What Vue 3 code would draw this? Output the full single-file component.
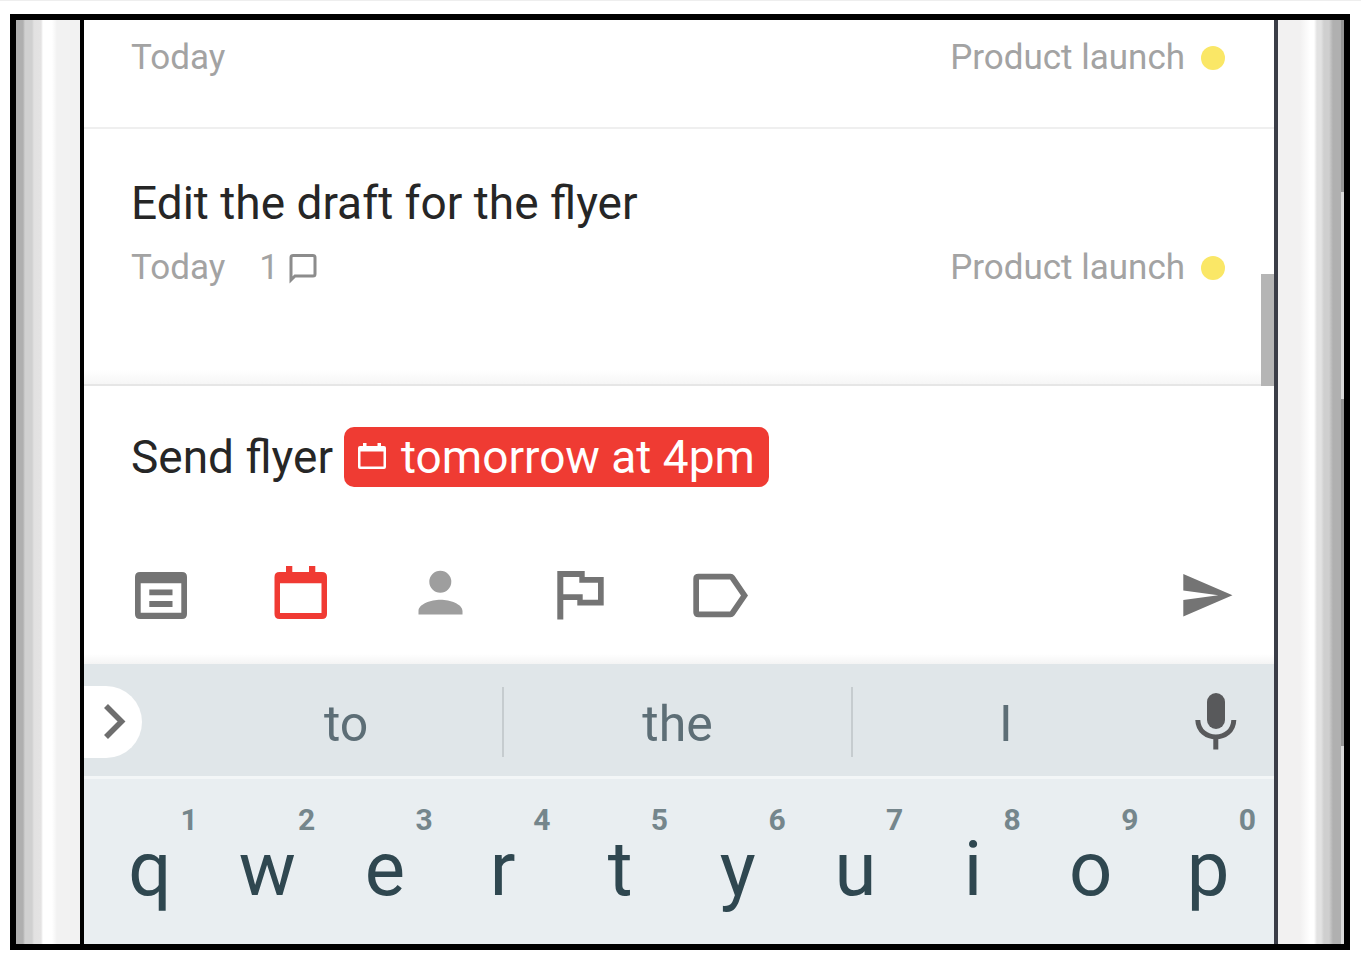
<template>
  <main class="page">
    <div class="frame">
      <div class="bezel bezel-left"></div>

      <div class="screen">
        <section class="task-list">
          <article class="task">
            <div class="task-meta">
              <span>Today</span>
              <span class="project">Product launch <i class="dot"></i></span>
            </div>
          </article>
          <article class="task task-last">
            <h2>Edit the draft for the flyer</h2>
            <div class="task-meta">
              <span>Today</span>
              <span class="comments">
                1
                <svg width="30" height="32" viewBox="0 0 30 32" aria-hidden="true">
                  <path d="M3 28V5.500Q3 3.500 5 3.500H25Q27 3.500 27 5.500V22Q27 24 25 24H7Z" fill="none" stroke="#8c8c8c" stroke-width="3" />
                </svg>
              </span>
              <span class="project">Product launch <i class="dot"></i></span>
            </div>
          </article>
          <div class="scroll-thumb"></div>
        </section>

        <section class="composer">
          <div class="entry">
            <input v-model="taskName" type="text" aria-label="Task name" />
            <button type="button" class="date-chip">
              <svg width="28" height="28" viewBox="0 0 28 28" aria-hidden="true">
                <path fill="#fff" fill-rule="evenodd" d="M5 0H8.500V3H19.500V0H23V3H26Q28 3 28 5V24Q28 26 26 26H2Q0 26 0 24V5Q0 3 2 3H5ZM2.500 8.500V23.500H25.500V8.500Z" />
              </svg>
              <span>tomorrow at 4pm</span>
            </button>
          </div>

          <div class="toolbar">
            <button
              v-for="tool in tools"
              :key="tool.name"
              type="button"
              class="tool"
              :class="tool.name"
              :aria-label="tool.label"
            >
              <svg width="70" height="70" viewBox="0 0 70 70" aria-hidden="true">
                <path :d="tool.path" fill-rule="evenodd" />
              </svg>
            </button>
          </div>
        </section>

        <section class="suggestions">
          <button type="button" class="expand" aria-label="More">
            <svg width="58" height="72" viewBox="0 0 58 72" aria-hidden="true">
              <path d="M22 20L37.500 35.500L22 51" fill="none" stroke="#6e6e6e" stroke-width="5.600" />
            </svg>
          </button>
          <div class="words">
            <button v-for="word in words" :key="word" type="button">{{ word }}</button>
          </div>
          <button type="button" class="mic" aria-label="Voice input">
            <svg width="50" height="64" viewBox="0 0 50 64" aria-hidden="true">
              <rect x="16" y="3" width="18" height="36" rx="9" fill="#58595b" />
              <path d="M6.800 30C7.500 52.500 42.100 52.500 42.800 30M24.800 46V59.500" fill="none" stroke="#58595b" stroke-width="5" />
            </svg>
          </button>
        </section>

        <section class="keyboard">
          <button v-for="key in keys" :key="key.letter" type="button" class="key">
            <span class="digit">{{ key.digit }}</span>
            <span class="letter">{{ key.letter }}</span>
          </button>
        </section>
      </div>

      <div class="bezel bezel-right">
        <div class="side-buttons"></div>
      </div>
    </div>
  </main>
</template>

<script setup>
import { ref } from 'vue';

const taskName = ref('Send flyer');

const words = ['to', 'the', 'I'];

const keys = 'qwertyuiop'.split('').map((letter, index) => ({
  letter,
  digit: (index + 1) % 10
}));

const tools = [
  {
    name: 'project-list',
    label: 'Project',
    path: 'M14 12H56Q61 12 61 17V54Q61 59 56 59H14Q9 59 9 54V17Q9 12 14 12ZM14.700 23.300V52.700H55.300V23.300ZM23.300 29.500H46.500V35.200H23.300ZM23.300 41H46.500V47H23.300Z'
  },
  {
    name: 'date',
    label: 'Due date',
    path: 'M20 6H26.300V12H43V6H49.300V12H56Q61 12 61 17V54Q61 59 56 59H13.500Q8.500 59 8.500 54V17Q8.500 12 13.500 12H20ZM14 23.300V53H55.500V23.300Z'
  },
  {
    name: 'person',
    label: 'Assignee',
    path: 'M34.300 10.700A11 11 0 0 1 34.300 32.700A11 11 0 0 1 34.300 10.700ZM12.500 54.500V51C12.500 44 25 39.700 34.500 39.700C44 39.700 56.500 44 56.500 51V54.500Z'
  },
  {
    name: 'flag',
    label: 'Priority',
    path: 'M11.300 59.500V11H38.700V17H57.700V45.400H31.300V40H17.300V59.500ZM17.300 17V34.300H36.700V39.700H52V22.700H33.300V17Z'
  },
  {
    name: 'label',
    label: 'Label',
    path: 'M12.500 13.700H44.500Q47 13.700 48.500 15.700L62 35.500L48.500 55.300Q47 57.300 44.500 57.300H12.500Q7.300 57.300 7.300 52.300V18.700Q7.300 13.700 12.500 13.700ZM13 19.400V51.600H44L55 35.500L44 19.400Z'
  },
  {
    name: 'send',
    label: 'Send',
    path: 'M11.300 56.500L60.500 35.300L11.300 14V30.500L46.300 35.300L11.300 40Z'
  }
];
</script>

<style>
body {
  margin: 0;
  background: #fff;
}
</style>

<style scoped>
.page {
  box-sizing: border-box;
  padding: 13px 11px 16px 10px;
  border-top: 1px solid #eee;
  font-family: Roboto, "Liberation Sans", sans-serif;
}

button,
input {
  margin: 0;
  padding: 0;
  border: none;
  background: none;
  color: inherit;
  font: inherit;
}

button {
  cursor: pointer;
}

svg {
  display: block;
  flex: none;
}

.frame {
  display: flex;
  border: 6px solid #000;
}

.bezel {
  flex: none;
}

.bezel-left {
  width: 64px;
  background: linear-gradient(to right, #afafaf 7px, #d0d0d0 9px, #d0d0d0 16px, #e2e1e1 18px, #e4e3e3 25px, #fff 27px, #fff 36px, #f2f2f2 41px);
}

.bezel-right {
  display: flex;
  justify-content: flex-end;
  width: 66px;
  background: linear-gradient(to right, #f2f1f1 22px, #fff 32px, #fff 36px, #e2e2e2 39px, #e2e2e2 43px, #cfcfcf 46px, #cfcfcf 51px, #b0b0b0 55px);
}

.side-buttons {
  width: 3px;
  background: linear-gradient(#969696 172px, #dadada 172px, #dadada 379px, #969696 379px, #969696 726px, #dadada 726px);
}

.screen {
  flex: 1;
  min-width: 0;
  border-right: 4px solid #3a3d47;
  border-left: 4px solid #000;
  background: #fff;
}

.task-list {
  position: relative;
}

.task {
  padding: 16px 49px 47px 47px;
  border-bottom: 2px solid #efefef;
}

.task-last {
  padding: 47px 49px 94px 47px;
  border-bottom: 2px solid #e6e6e6;
  background: linear-gradient(to top, #f6f6f6, #fff 14px);
}

.task h2 {
  margin: 0 0 16px;
  color: #262626;
  font-size: 46px;
  font-weight: 400;
  line-height: 54px;
}

.task-meta {
  display: flex;
  align-items: center;
  color: #a3a3a3;
  font-size: 35px;
  line-height: 44px;
}

.comments {
  display: flex;
  align-items: center;
  gap: 9px;
  margin-left: 34px;
}

.project {
  display: flex;
  align-items: center;
  gap: 16px;
  margin-left: auto;
}

.dot {
  width: 24px;
  height: 24px;
  border-radius: 50%;
  background: #fae766;
}

.scroll-thumb {
  position: absolute;
  right: 0;
  bottom: 0;
  width: 13px;
  height: 112px;
  background: #b5b5b5;
}

.composer {
  padding-top: 41px;
  background: linear-gradient(to top, #f4f4f4, #fff 10px);
}

.entry {
  display: flex;
  align-items: center;
  padding-left: 47px;
  color: #262626;
  font-size: 46px;
  line-height: 60px;
}

.entry input {
  width: 213px;
  height: 60px;
  outline: none;
}

.date-chip {
  display: flex;
  align-items: center;
  gap: 15px;
  padding: 0 14px;
  border-radius: 10px;
  background: #ef3b33;
  color: #fff;
}

.toolbar {
  display: flex;
  padding: 73px 0 34px 7px;
}

.tool {
  display: flex;
  justify-content: center;
  width: 140px;
  fill: #747474;
}

.tool.date {
  fill: #f03a33;
}

.tool.person {
  fill: #9e9e9e;
}

.tool.send {
  width: 134px;
  margin-left: auto;
}

.suggestions {
  display: flex;
  align-items: center;
  box-sizing: border-box;
  height: 115px;
  padding-top: 3px;
  border-bottom: 3px solid #f3f6f7;
  background: #e0e6e9;
}

.expand {
  border-radius: 0 36px 36px 0;
  background: #fff;
}

.words {
  display: grid;
  flex: 1;
  grid-template-columns: 312fr 348fr 308fr;
  margin-left: 48px;
  color: #5d6e76;
  font-size: 50px;
  line-height: 66px;
}

.words button {
  padding-top: 4px;
}

.words button + button {
  border-left: 2px solid #c6cccf;
}

.mic {
  margin: 0 33px 0 32px;
}

.keyboard {
  display: grid;
  grid-template-columns: repeat(10, 1fr);
  padding: 22px 7px 44px;
  background: #e9eef1;
}

.key {
  display: flex;
  flex-direction: column;
}

.digit {
  align-self: flex-end;
  padding-right: 11px;
  color: #75868c;
  font-size: 30px;
  font-weight: 700;
  line-height: 38px;
}

.letter {
  align-self: center;
  color: #2f4750;
  font-size: 76px;
  line-height: 61px;
}
</style>
